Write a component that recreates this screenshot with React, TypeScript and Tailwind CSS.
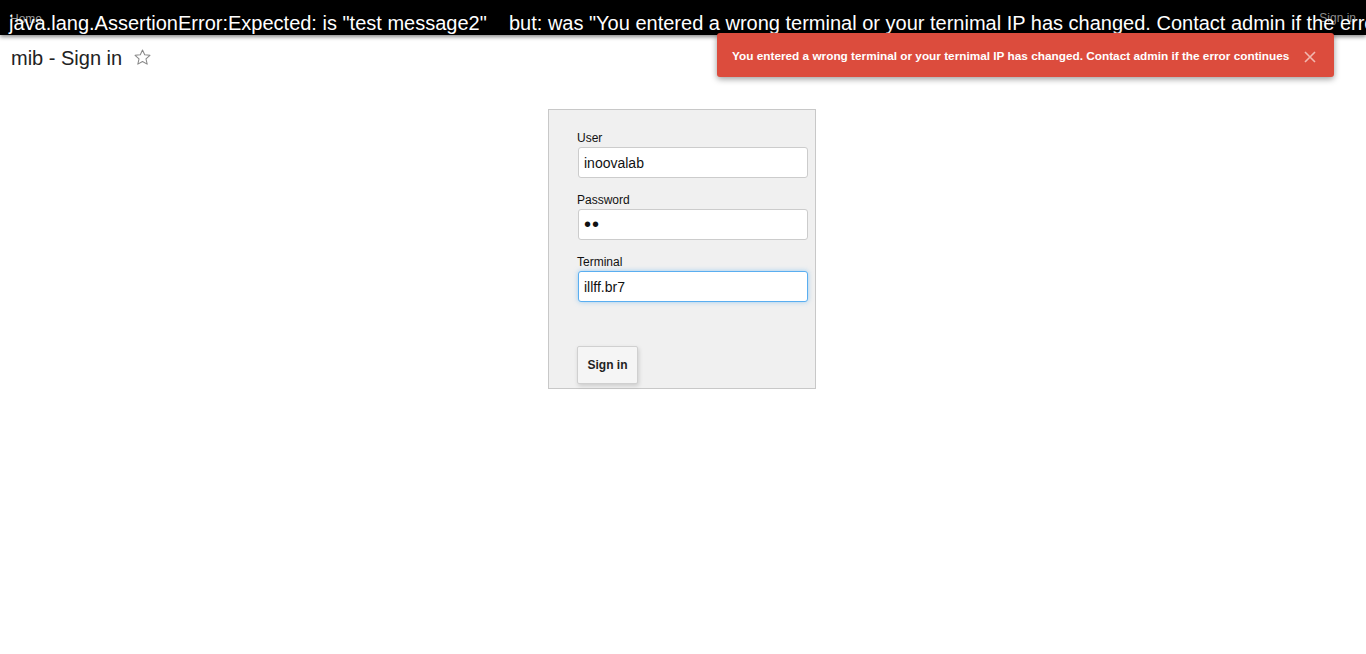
import React from "react";

const font = { fontFamily: '"Liberation Sans", Arial, sans-serif' };

function Field({
  label,
  value,
  type = "text",
  focused = false,
  big = false,
}: {
  label: string;
  value: string;
  type?: string;
  focused?: boolean;
  big?: boolean;
}) {
  return (
    <div className="mb-[15px] flex flex-col">
      <label className="h-[14px] text-[12px] leading-[14px] text-[#111]">{label}</label>
      <input
        type={type}
        readOnly
        defaultValue={value}
        className={
          "mt-[2px] ml-[1px] h-[31px] w-[230px] rounded-[3px] border bg-white pl-[5px] text-[#111] outline-none " +
          (big ? "text-[20px] tracking-[1px] " : "text-[14px] ") +
          (focused
            ? "border-[#5aaef0] shadow-[0_0_5px_rgba(90,174,240,0.55)]"
            : "border-[#cccccc]")
        }
        style={font}
      />
    </div>
  );
}

export default function App() {
  return (
    <div className="relative h-[654px] w-[1366px] overflow-hidden bg-white" style={font}>
      {/* navbar */}
      <div className="relative z-10 flex h-[35px] w-full items-start justify-between bg-black shadow-[0_2px_4px_rgba(0,0,0,0.45)]">
        <span className="ml-[10px] mt-[12px] text-[12px] leading-[14px] text-[#9a9a9a]">Home</span>
        <span className="mr-[10px] mt-[11px] text-[12px] leading-[14px] text-[#8a8a8a]">Sign in</span>
        <div className="absolute left-[9px] top-[12px] whitespace-pre text-[20px] leading-[23px] text-white">
          {'java.lang.AssertionError:Expected: is "test message2"    but: was "You entered a wrong terminal or your ternimal IP has changed. Contact admin if the error continues"'}
        </div>
      </div>

      {/* toast */}
      <div className="absolute left-[717px] top-[33px] z-20 flex h-[44px] w-[617px] items-center rounded-[3px] bg-[#dc4c3d] pl-[15px] pr-[18px] pt-[3px] shadow-[0_2px_6px_rgba(0,0,0,0.4)]">
        <span className="text-[11.8px] font-bold text-white">
          You entered a wrong terminal or your ternimal IP has changed. Contact admin if the error continues
        </span>
        <svg className="ml-auto" width="12" height="12" viewBox="0 0 12 12">
          <path d="M1 1 L11 11 M11 1 L1 11" stroke="#f2b8b0" strokeWidth="1.6" fill="none" />
        </svg>
      </div>

      {/* title */}
      <div className="ml-[11px] mt-[11px] flex items-center gap-[12px]">
        <h1 className="text-[20px] leading-[24px] text-[#222]">mib - Sign in</h1>
        <svg width="19" height="19" viewBox="0 0 24 24" className="mb-[2px] -ml-[1px]">
          <path
            d="M12 2.5 L14.8 8.6 L21.4 9.3 L16.4 13.8 L17.9 20.4 L12 17 L6.1 20.4 L7.6 13.8 L2.6 9.3 L9.2 8.6 Z"
            fill="none"
            stroke="#888"
            strokeWidth="1.3"
            strokeLinejoin="round"
          />
        </svg>
      </div>

      {/* login box */}
      <div className="mx-auto mt-[39px] w-[268px] -translate-x-[1px] border border-[#c8c8c8] bg-[#f0f0f0] pl-[28px] pr-[6px] pt-[21px] pb-[4px]">
        <Field label="User" value="inoovalab" />
        <Field label="Password" value="ab" type="password" big />
        <Field label="Terminal" value="illff.br7" focused />
        <button
          className="mt-[29px] h-[38px] w-[61px] rounded-[2px] border border-[#d0d0d0] bg-[#f5f5f5] text-[12px] font-bold text-[#222] shadow-[1px_2px_4px_rgba(0,0,0,0.15)]"
          style={font}
        >
          Sign in
        </button>
      </div>
    </div>
  );
}
